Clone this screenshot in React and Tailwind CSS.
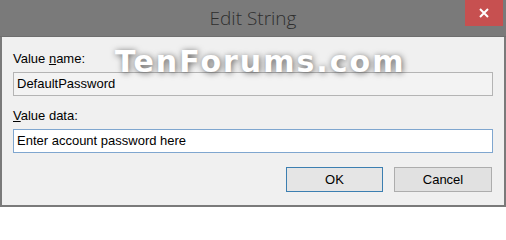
export default function App() {
  return (
    <div className="relative w-[506px] h-[207px] bg-[#7a7a7a] flex flex-col font-['Liberation_Sans',Arial,sans-serif] text-[13px] text-black">
      {/* title bar */}
      <div className="h-[37px] grid grid-cols-[1fr_auto_1fr] items-start border-b border-[#6e6e6e]">
        <div />
        <div className="pt-[6px] text-[19px] leading-[24px] text-[#2e2e2e] font-['Open_Sans',sans-serif] font-light">
          Edit String
        </div>
        <div className="flex justify-end pr-[3px]">
          <div className="w-[38px] h-[26px] bg-[#c75050] flex items-center justify-center">
            <svg width="10" height="10" viewBox="0 0 10 10">
              <path d="M1 1 L9 9 M9 1 L1 9" stroke="white" strokeWidth="2" />
            </svg>
          </div>
        </div>
      </div>

      {/* client area */}
      <div className="flex-1 mx-[2px] mb-[2px] bg-[#f0f0f0] px-[11px] pt-[14px] flex flex-col">
        <div className="leading-[15px]">
          Value <span className="underline">n</span>ame:
        </div>
        <div className="mt-[6px] h-[24px] border border-[#b4b4b4] bg-[#f3f3f3] px-[3px] leading-[22px]">
          DefaultPassword
        </div>
        <div className="mt-[12px] leading-[15px]">
          <span className="underline">V</span>alue data:
        </div>
        <div className="mt-[6px] h-[24px] border border-[#7fa6cf] bg-white px-[3px] leading-[22px]">
          Enter account password here
        </div>
        <div className="mt-[14px] flex justify-end gap-[11px] pr-[1px]">
          <button className="w-[97px] h-[25px] border border-[#3c7fb1] bg-[#e5e5e5] leading-[23px]">
            OK
          </button>
          <button className="w-[98px] h-[25px] border border-[#adadad] bg-[#e1e1e1] leading-[23px]">
            Cancel
          </button>
        </div>
      </div>

      {/* watermark */}
      <div className="absolute left-[115px] top-[47px] text-[30px] leading-[30px] font-bold tracking-[2px] text-white font-['DejaVu_Sans',sans-serif] [text-shadow:1px_1px_6px_rgba(0,0,0,0.6)] pointer-events-none">
        TenForums.com
      </div>
    </div>
  );
}
